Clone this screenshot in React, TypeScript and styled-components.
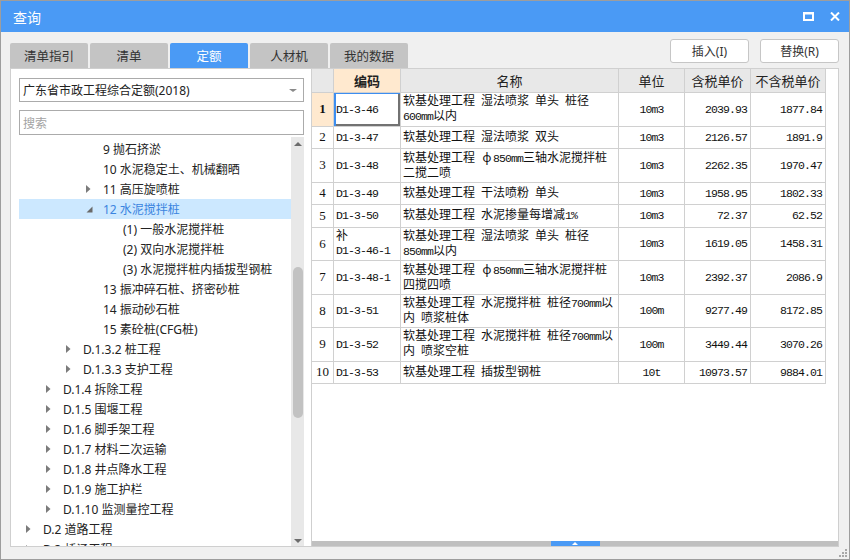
import styled, { createGlobalStyle } from 'styled-components';

const GlobalStyle = createGlobalStyle`
  html, body { margin: 0; padding: 0; background: #ffffff; }
  body {
    font-family: "Noto Sans", "Noto Sans CJK SC", sans-serif;
    font-size: 12px;
    color: #222;
  }
  *, *::before, *::after { box-sizing: border-box; }
`;

const BLUE = '#4a9af5';
const CJK = '"Noto Sans", "Noto Sans CJK SC", sans-serif';

const Window = styled.div`
  position: relative;
  width: 850px;
  height: 560px;
  display: flex;
  flex-direction: column;
  border: 1px solid #9d9d9d;
  background: #f0f0f0;
`;

const TitleBar = styled.div`
  flex: none;
  height: 31px;
  display: flex;
  align-items: center;
  padding: 0 9px 0 12px;
  background: ${BLUE};
`;

const Title = styled.span`
  flex: 1;
  color: #fff;
  font-size: 14px;
  font-family: ${CJK};
`;

const TitleButtons = styled.div`
  display: flex;
  align-items: center;
  gap: 16px;
`;

const Body = styled.div`
  flex: 1;
  min-height: 0;
  display: flex;
  flex-direction: column;
  padding: 0 10px 12px 9px;
`;

const TopRow = styled.div`
  flex: none;
  height: 36px;
  display: flex;
  justify-content: space-between;
`;

const Tabs = styled.div`
  align-self: flex-end;
  display: flex;
  gap: 2px;
`;

const Tab = styled.div<{ $active?: boolean }>`
  width: 78px;
  height: 25px;
  display: flex;
  align-items: center;
  justify-content: center;
  border-radius: 2px 2px 0 0;
  background: ${(p) => (p.$active ? BLUE : '#c4c4c4')};
  color: ${(p) => (p.$active ? '#fff' : '#333')};
  font-size: 12.5px;
`;

const Actions = styled.div`
  display: flex;
  gap: 11px;
  margin-top: 7px;
`;

const ActionButton = styled.button`
  width: 79px;
  height: 24px;
  padding: 0;
  border: 1px solid #c6c6c6;
  border-radius: 3px;
  background: #fff;
  color: #333;
  font-family: ${CJK};
  font-size: 12px;
`;

const Panels = styled.div`
  flex: 1;
  min-height: 0;
  display: flex;
`;

const LeftPanel = styled.div`
  width: 301px;
  display: flex;
  flex-direction: column;
  padding: 9px 7px 0 8px;
  border: 1px solid #cfcfcf;
  border-right: none;
  background: #fff;
`;

const SelectBox = styled.div`
  position: relative;
  height: 24px;
  display: flex;
  align-items: center;
  padding-left: 3px;
  border: 1px solid #ababab;
  font-size: 12px;
  color: #222;
  &::after {
    content: '';
    position: absolute;
    right: 6px;
    top: 10px;
    border-left: 4px solid transparent;
    border-right: 4px solid transparent;
    border-top: 3px solid #8a8a8a;
  }
`;

const SearchBox = styled.div`
  height: 25px;
  margin-top: 8px;
  display: flex;
  align-items: center;
  padding-left: 3px;
  border: 1px solid #ababab;
  color: #a3a3a3;
  font-size: 12px;
`;

const Tree = styled.div`
  flex: 1;
  min-height: 0;
  margin-top: 2px;
  display: flex;
  overflow: hidden;
`;

const TreeList = styled.div`
  flex: 1;
  padding-top: 2px;
  overflow: hidden;
`;

const TreeRow = styled.div<{ $level: number; $selected?: boolean }>`
  height: 20px;
  display: flex;
  align-items: center;
  padding-left: ${(p) => 4 + p.$level * 20}px;
  white-space: nowrap;
  background: ${(p) => (p.$selected ? '#cce8ff' : 'transparent')};
  color: ${(p) => (p.$selected ? '#3a84e0' : '#222')};
  font-size: 12px;
`;

const Expander = styled.span`
  width: 20px;
  flex: none;
  display: flex;
  align-items: center;
  padding-left: 3px;
`;

const ScrollTrack = styled.div`
  position: relative;
  width: 13px;
  flex: none;
  background: #e8e8e8;
`;

const ScrollThumb = styled.div`
  position: absolute;
  left: 2px;
  top: 130px;
  width: 10px;
  height: 151px;
  border-radius: 5px;
  background: #c2c2c2;
`;

const ScrollArrow = styled.span<{ $down?: boolean }>`
  position: absolute;
  left: 3px;
  ${(p) => (p.$down ? 'bottom: 3px;' : 'top: 5px;')}
  border-left: 4.5px solid transparent;
  border-right: 4.5px solid transparent;
  ${(p) => (p.$down ? 'border-top' : 'border-bottom')}: 4px solid #6c6c6c;
`;

const RightPanel = styled.div`
  flex: 1;
  display: flex;
  flex-direction: column;
  border: 1px solid #cfcfcf;
  background: #fff;
`;

const TableArea = styled.div`
  flex: 1;
  min-height: 0;
`;

const Grid = styled.table`
  width: 514px;
  margin: -1px 0 0 -1px;
  table-layout: fixed;
  border-collapse: collapse;
  font-family: ${CJK};
  font-size: 12px;
  color: #111;
`;

const HeadCell = styled.th<{ $hot?: boolean }>`
  height: 24px;
  padding: 0;
  border: 1px solid #d0d0d0;
  background: ${(p) => (p.$hot ? '#ffe9cf' : '#e8e8e8')};
  font-weight: ${(p) => (p.$hot ? 700 : 400)};
  font-size: 13px;
  color: #222;
  text-align: center;
`;

const Row = styled.tr<{ $tall?: boolean }>`
  height: ${(p) => (p.$tall ? 33.5 : 22.5)}px;
`;

const RowNo = styled.td<{ $hot?: boolean }>`
  padding: 0;
  border: 1px solid #d0d0d0;
  background: ${(p) => (p.$hot ? '#ffe9cf' : '#fff')};
  font-family: "Liberation Serif", serif;
  font-size: 13px;
  font-weight: ${(p) => (p.$hot ? 700 : 400)};
  text-align: center;
`;

const Cell = styled.td<{ $align?: 'left' | 'center' | 'right'; $focus?: boolean }>`
  padding: 0 ${(p) => (p.$align === 'right' ? 3 : 2)}px 0 2px;
  border: 1px solid #d0d0d0;
  line-height: 14px;
  white-space: nowrap;
  overflow: hidden;
  text-align: ${(p) => p.$align ?? 'left'};
  vertical-align: middle;
  box-shadow: ${(p) =>
    p.$focus ? 'inset 2px 1px 0 #3d8ef0, inset -2px -2px 0 #727272' : 'none'};
`;

const Latin = styled.span`
  font-family: "Liberation Mono", monospace;
  font-size: 11.5px;
  letter-spacing: -0.9px;
`;

const Wide = styled.span`
  display: inline-block;
  width: 12px;
  text-align: center;
`;

const SplitBar = styled.div`
  flex: none;
  height: 5px;
  display: flex;
  justify-content: center;
  background: #c0c0c0;
`;

const SplitThumb = styled.div`
  width: 49px;
  display: flex;
  align-items: center;
  justify-content: center;
  background: ${BLUE};
  &::after {
    content: '';
    border-left: 3px solid transparent;
    border-right: 3px solid transparent;
    border-bottom: 3px solid #fff;
  }
`;

const Grip = styled.svg`
  position: absolute;
  right: 1px;
  bottom: 1px;
`;

type TreeItem = { level: number; text: string; arrow?: 'open' | 'closed'; selected?: boolean };

const treeItems: TreeItem[] = [
  { level: 3, text: '9 抛石挤淤' },
  { level: 3, text: '10 水泥稳定土、机械翻晒' },
  { level: 3, text: '11 高压旋喷桩', arrow: 'closed' },
  { level: 3, text: '12 水泥搅拌桩', arrow: 'open', selected: true },
  { level: 4, text: '(1) 一般水泥搅拌桩' },
  { level: 4, text: '(2) 双向水泥搅拌桩' },
  { level: 4, text: '(3) 水泥搅拌桩内插拔型钢桩' },
  { level: 3, text: '13 振冲碎石桩、挤密砂桩' },
  { level: 3, text: '14 振动砂石桩' },
  { level: 3, text: '15 素砼桩(CFG桩)' },
  { level: 2, text: 'D.1.3.2 桩工程', arrow: 'closed' },
  { level: 2, text: 'D.1.3.3 支护工程', arrow: 'closed' },
  { level: 1, text: 'D.1.4 拆除工程', arrow: 'closed' },
  { level: 1, text: 'D.1.5 围堰工程', arrow: 'closed' },
  { level: 1, text: 'D.1.6 脚手架工程', arrow: 'closed' },
  { level: 1, text: 'D.1.7 材料二次运输', arrow: 'closed' },
  { level: 1, text: 'D.1.8 井点降水工程', arrow: 'closed' },
  { level: 1, text: 'D.1.9 施工护栏', arrow: 'closed' },
  { level: 1, text: 'D.1.10 监测量控工程', arrow: 'closed' },
  { level: 0, text: 'D.2 道路工程', arrow: 'closed' },
  { level: 0, text: 'D.3 桥涵工程', arrow: 'closed' },
];

type Quota = { code: string[]; name: string[]; unit: string; tax: string; net: string };

const quotas: Quota[] = [
  { code: ['D1-3-46'], name: ['软基处理工程 湿法喷浆 单头 桩径', '600mm以内'], unit: '10m3', tax: '2039.93', net: '1877.84' },
  { code: ['D1-3-47'], name: ['软基处理工程 湿法喷浆 双头'], unit: '10m3', tax: '2126.57', net: '1891.9' },
  { code: ['D1-3-48'], name: ['软基处理工程 ф850mm三轴水泥搅拌桩', '二搅二喷'], unit: '10m3', tax: '2262.35', net: '1970.47' },
  { code: ['D1-3-49'], name: ['软基处理工程 干法喷粉 单头'], unit: '10m3', tax: '1958.95', net: '1802.33' },
  { code: ['D1-3-50'], name: ['软基处理工程 水泥掺量每增减1%'], unit: '10m3', tax: '72.37', net: '62.52' },
  { code: ['补', 'D1-3-46-1'], name: ['软基处理工程 湿法喷浆 单头 桩径', '850mm以内'], unit: '10m3', tax: '1619.05', net: '1458.31' },
  { code: ['D1-3-48-1'], name: ['软基处理工程 ф850mm三轴水泥搅拌桩', '四搅四喷'], unit: '10m3', tax: '2392.37', net: '2086.9' },
  { code: ['D1-3-51'], name: ['软基处理工程 水泥搅拌桩 桩径700mm以', '内 喷浆桩体'], unit: '100m', tax: '9277.49', net: '8172.85' },
  { code: ['D1-3-52'], name: ['软基处理工程 水泥搅拌桩 桩径700mm以', '内 喷浆空桩'], unit: '100m', tax: '3449.44', net: '3070.26' },
  { code: ['D1-3-53'], name: ['软基处理工程 插拔型钢桩'], unit: '10t', tax: '10973.57', net: '9884.01' },
];

// SimSun-like mix: half-width latin runs, full-width CJK
function mixed(s: string) {
  return s
    .split(/([\x20-\x7e]+|ф)/)
    .filter(Boolean)
    .map((part, i) => {
      if (part === 'ф') return <Wide key={i}>ф</Wide>;
      if (/^[\x20-\x7e]+$/.test(part)) return <Latin key={i}>{part}</Latin>;
      return <span key={i}>{part}</span>;
    });
}

function Lines({ lines }: { lines: string[] }) {
  return (
    <>
      {lines.map((l, i) => (
        <div key={i}>{mixed(l)}</div>
      ))}
    </>
  );
}

function Arrow({ kind }: { kind?: 'open' | 'closed' }) {
  if (kind === 'closed')
    return (
      <svg width="5" height="8" viewBox="0 0 5 8">
        <polygon points="0,0 4.5,4 0,8" fill="#7b7b7b" />
      </svg>
    );
  if (kind === 'open')
    return (
      <svg width="7" height="7" viewBox="0 0 7 7">
        <polygon points="6.5,0.5 6.5,6.5 0.5,6.5" fill="#6a6a6a" />
      </svg>
    );
  return null;
}

export default function App() {
  return (
    <>
      <GlobalStyle />
      <Window>
        <TitleBar>
          <Title>查询</Title>
          <TitleButtons>
            <svg width="11" height="9" viewBox="0 0 11 9">
              <rect x="1" y="1.5" width="9" height="6.5" fill="none" stroke="#fff" strokeWidth="2" />
              <rect x="0" y="0" width="11" height="2" fill="#fff" />
            </svg>
            <svg width="10" height="9" viewBox="0 0 10 9">
              <path d="M1 0.5 L9 8.5 M9 0.5 L1 8.5" stroke="#fff" strokeWidth="2" />
            </svg>
          </TitleButtons>
        </TitleBar>
        <Body>
          <TopRow>
            <Tabs>
              <Tab>清单指引</Tab>
              <Tab>清单</Tab>
              <Tab $active>定额</Tab>
              <Tab>人材机</Tab>
              <Tab>我的数据</Tab>
            </Tabs>
            <Actions>
              <ActionButton type="button">插入(I)</ActionButton>
              <ActionButton type="button">替换(R)</ActionButton>
            </Actions>
          </TopRow>
          <Panels>
            <LeftPanel>
              <SelectBox>广东省市政工程综合定额(2018)</SelectBox>
              <SearchBox>搜索</SearchBox>
              <Tree>
                <TreeList>
                  {treeItems.map((t) => (
                    <TreeRow key={t.text} $level={t.level} $selected={t.selected}>
                      <Expander>
                        <Arrow kind={t.arrow} />
                      </Expander>
                      {t.text}
                    </TreeRow>
                  ))}
                </TreeList>
                <ScrollTrack>
                  <ScrollArrow />
                  <ScrollThumb />
                  <ScrollArrow $down />
                </ScrollTrack>
              </Tree>
            </LeftPanel>
            <RightPanel>
              <TableArea>
                <Grid>
                  <colgroup>
                    <col style={{ width: 22 }} />
                    <col style={{ width: 67 }} />
                    <col style={{ width: 218 }} />
                    <col style={{ width: 66 }} />
                    <col style={{ width: 66 }} />
                    <col style={{ width: 75 }} />
                  </colgroup>
                  <thead>
                    <tr>
                      <HeadCell />
                      <HeadCell $hot>编码</HeadCell>
                      <HeadCell>名称</HeadCell>
                      <HeadCell>单位</HeadCell>
                      <HeadCell>含税单价</HeadCell>
                      <HeadCell>不含税单价</HeadCell>
                    </tr>
                  </thead>
                  <tbody>
                    {quotas.map((q, i) => (
                      <Row key={i} $tall={q.name.length > 1 || q.code.length > 1}>
                        <RowNo $hot={i === 0}>{i + 1}</RowNo>
                        <Cell $focus={i === 0}>
                          <Lines lines={q.code} />
                        </Cell>
                        <Cell>
                          <Lines lines={q.name} />
                        </Cell>
                        <Cell $align="center">
                          <Latin>{q.unit}</Latin>
                        </Cell>
                        <Cell $align="right">
                          <Latin>{q.tax}</Latin>
                        </Cell>
                        <Cell $align="right">
                          <Latin>{q.net}</Latin>
                        </Cell>
                      </Row>
                    ))}
                  </tbody>
                </Grid>
              </TableArea>
              <SplitBar>
                <SplitThumb />
              </SplitBar>
            </RightPanel>
          </Panels>
        </Body>
        <Grip width="9" height="9" viewBox="0 0 9 9">
          <rect x="6" y="0" width="2" height="2" fill="#a8a8a8" />
          <rect x="3" y="3" width="2" height="2" fill="#a8a8a8" />
          <rect x="6" y="3" width="2" height="2" fill="#a8a8a8" />
          <rect x="0" y="6" width="2" height="2" fill="#a8a8a8" />
          <rect x="3" y="6" width="2" height="2" fill="#a8a8a8" />
          <rect x="6" y="6" width="2" height="2" fill="#a8a8a8" />
        </Grip>
      </Window>
    </>
  );
}
